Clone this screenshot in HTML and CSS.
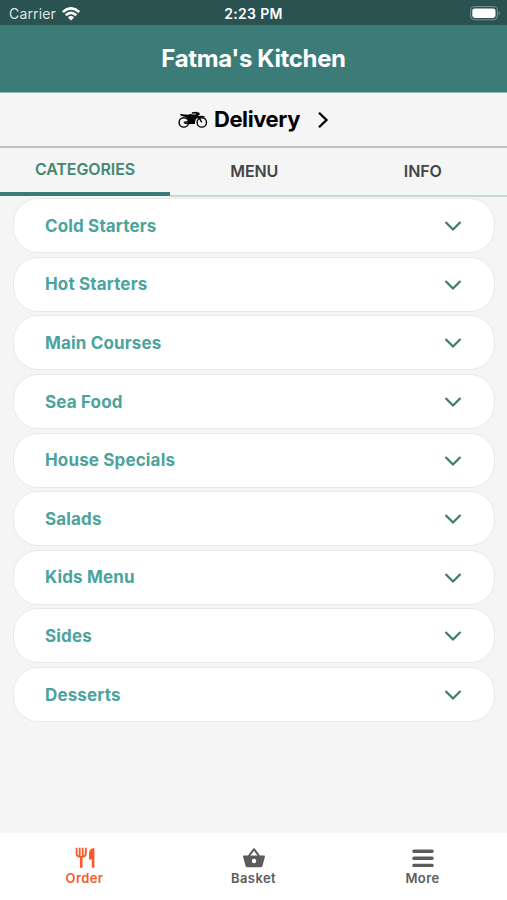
FILE: index.html
```html
<!DOCTYPE html>
<html lang="en">
<head>
  <meta charset="UTF-8" />
  <meta name="viewport" content="width=device-width, initial-scale=1.0" />
  <title>Fatma's Kitchen</title>
  <link rel="stylesheet" href="styles.css">
</head>
<body>

  <svg class="sprite" width="0" height="0">
    <symbol id="chevron" viewBox="0 0 18 12">
      <path d="M1.5 2 L9 9.5 L16.5 2" fill="none" stroke="currentColor" stroke-width="2.2" />
    </symbol>
  </svg>

  <div class="status-bar">
    <div class="carrier">
      <span>Carrier</span>
      <svg class="wifi" viewBox="0 0 18 14" width="18" height="14">
        <path d="M0.8 5.1 Q9 -2.3 17.2 5.1 M3.7 8.2 Q9 3.4 14.3 8.2" fill="none" stroke="#fff" stroke-width="2.7" />
        <path d="M5.9 10.4 Q9 7.6 12.1 10.4 L9 13.6 Z" fill="#fff" />
      </svg>
    </div>
    <span class="time">2:23 PM</span>
    <svg class="battery" viewBox="0 0 31 15" width="31" height="15">
      <rect x="0.6" y="0.6" width="26.8" height="13.2" rx="4" fill="none" stroke="#7d9694" />
      <rect x="2.3" y="2.4" width="23.2" height="9.6" rx="2.4" fill="#fff" />
      <path d="M28.8 5 Q30.8 7.2 28.8 9.6 Z" fill="#7d9694" />
    </svg>
  </div>

  <header class="header">
    <h1>Fatma's Kitchen</h1>
  </header>

  <div class="delivery">
    <svg class="bike" viewBox="0 0 30 18" width="30" height="18">
      <g fill="none" stroke="#000" stroke-width="1.4">
        <circle cx="5.8" cy="11.4" r="4.7" />
        <circle cx="23.8" cy="11.4" r="4.7" />
        <path d="M23.8 11.4 L18 1.6 L13.8 2" />
        <path d="M5.8 11.4 L12 10.4" />
      </g>
      <path d="M1.6 3 L10 3.8 Q12.5 2.6 15 3.4 L19.2 3.2 L20.4 6.4 L17.6 8.4 L16.8 12.8 L11.2 13.2 L9.6 7.4 Q7 5.2 3.5 5 Z" />
      <path d="M17.5 1 L21.2 1.4 L22 3.7 L19.5 4.2 Z" />
      <path d="M19.8 6 Q23 3.8 27 5.8 L26.4 6.8 Q23.4 5.6 21 7.4 Z" />
      <path d="M6.5 11.6 L17 11.4 L16.6 13 L6.5 12.9 Z" />
    </svg>
    <span class="delivery-label">Delivery</span>
    <svg class="next" viewBox="0 0 12 18" width="12" height="18">
      <path d="M2 1.7 L9.5 9 L2 16.3" fill="none" stroke="#000" stroke-width="2.3" />
    </svg>
  </div>

  <div class="tabs">
    <div class="tab active"><span>CATEGORIES</span></div>
    <div class="tab"><span>MENU</span></div>
    <div class="tab"><span>INFO</span></div>
  </div>

  <main class="categories">
    <div class="category"><span>Cold Starters</span><svg class="arrow"><use href="#chevron" /></svg></div>
    <div class="category"><span>Hot Starters</span><svg class="arrow"><use href="#chevron" /></svg></div>
    <div class="category"><span>Main Courses</span><svg class="arrow"><use href="#chevron" /></svg></div>
    <div class="category"><span>Sea Food</span><svg class="arrow"><use href="#chevron" /></svg></div>
    <div class="category"><span>House Specials</span><svg class="arrow"><use href="#chevron" /></svg></div>
    <div class="category"><span>Salads</span><svg class="arrow"><use href="#chevron" /></svg></div>
    <div class="category"><span>Kids Menu</span><svg class="arrow"><use href="#chevron" /></svg></div>
    <div class="category"><span>Sides</span><svg class="arrow"><use href="#chevron" /></svg></div>
    <div class="category"><span>Desserts</span><svg class="arrow"><use href="#chevron" /></svg></div>
  </main>

  <nav class="bottom-nav">
    <div class="nav-item selected">
      <svg viewBox="0 0 24 22" width="24" height="22">
        <path d="M3.6 0.8 V6.8 Q3.6 9.8 8.2 9.8 Q12.8 9.8 12.8 6.8 V0.8 M6.7 0.8 V9 M9.7 0.8 V9" fill="none" stroke="currentColor" stroke-width="1.8" />
        <path d="M6.9 9 H9.5 V20.8 H6.9 Z" fill="currentColor" />
        <path d="M21.4 1 V20.8 H18.8 V12.6 H16 V6.2 Q16 1.6 21.4 1 Z" fill="currentColor" />
      </svg>
      <span>Order</span>
    </div>
    <div class="nav-item">
      <svg viewBox="0 0 24 22" width="24" height="22">
        <path d="M6.8 9.2 L12 2.2 L17.2 9.2" fill="none" stroke="currentColor" stroke-width="2" stroke-linejoin="round" />
        <path fill-rule="evenodd" d="M1.8 8.4 H22.2 Q23.4 8.4 23 9.6 L20.5 18.7 Q20.1 20.2 18.6 20.2 H5.4 Q3.9 20.2 3.5 18.7 L1 9.6 Q0.6 8.4 1.8 8.4 Z M12 11.8 A2.2 2.2 0 1 0 12 16.2 A2.2 2.2 0 1 0 12 11.8 Z" fill="currentColor" />
      </svg>
      <span>Basket</span>
    </div>
    <div class="nav-item">
      <svg viewBox="0 0 24 22" width="24" height="22">
        <path d="M2.9 4.2 H21.1 M2.9 11.3 H21.1 M2.9 18.4 H21.1" stroke="currentColor" stroke-width="3.4" stroke-linecap="round" />
      </svg>
      <span>More</span>
    </div>
  </nav>

</body>
</html>
```
FILE: styles.css
```css
* {
  box-sizing: border-box;
}

body {
  margin: 0;
  height: 100vh;
  display: flex;
  flex-direction: column;
  background-color: #f5f5f5;
  font-family: Inter, "Liberation Sans", sans-serif;
}

.sprite {
  position: absolute;
}

.status-bar {
  height: 25px;
  flex: none;
  display: grid;
  grid-template-columns: 1fr auto 1fr;
  align-items: center;
  padding: 2px 6px 0 9px;
  background-color: #295251;
  color: #fff;
  font-size: 14px;
}

.carrier {
  display: flex;
  align-items: center;
  gap: 6px;
  color: #dce6e5;
  letter-spacing: 0.15px;
}

.time {
  margin-right: 3px;
  font-weight: 600;
  letter-spacing: 0.3px;
}

.battery {
  justify-self: end;
}

.header {
  height: 68px;
  flex: none;
  display: flex;
  align-items: center;
  justify-content: center;
  background-color: #3b7c78;
  border-bottom: 1px solid #8fb9b5;
}

.header h1 {
  margin: 0;
  color: #fff;
  font-size: 24px;
  font-weight: 700;
  letter-spacing: -0.35px;
}

.delivery {
  height: 55px;
  flex: none;
  display: flex;
  align-items: center;
  justify-content: center;
  border-bottom: 2px solid #c0c2c1;
}

.delivery-label {
  margin: -2px 17px 0 6px;
  font-size: 22px;
  font-weight: 700;
  letter-spacing: -0.4px;
}

.tabs {
  height: 49px;
  flex: none;
  display: grid;
  grid-template-columns: 170px 1fr 1fr;
}

.tab {
  display: flex;
  align-items: center;
  justify-content: center;
  padding-bottom: 2px;
  border-bottom: 2px solid #c5d9d5;
  color: #444;
  font-size: 16px;
  font-weight: 600;
  letter-spacing: -0.1px;
}

.tab.active {
  border-bottom: 4px solid #3b7c78;
  margin-bottom: 1px;
  color: #438773;
}

.categories {
  flex: 1;
  display: flex;
  flex-direction: column;
  gap: 3.6px;
  padding: 1.3px 12px 0 13px;
}

.category {
  height: 55px;
  flex: none;
  display: flex;
  align-items: center;
  justify-content: space-between;
  padding: 0 32px 0 31px;
  background-color: #fff;
  border: 1px solid #e9e9e9;
  border-radius: 25px;
  color: #4ba49c;
  font-size: 17px;
  font-weight: 650;
  letter-spacing: 0.15px;
}

.arrow {
  width: 18px;
  height: 12px;
  margin-top: 1px;
  color: #3b7c6e;
}

.bottom-nav {
  height: 67px;
  flex: none;
  display: grid;
  grid-template-columns: 1fr 1fr 1fr;
  background-color: #fff;
}

.nav-item {
  display: flex;
  flex-direction: column;
  align-items: center;
  padding-top: 14px;
  color: #5c5c5c;
  font-size: 13px;
  font-weight: 600;
  letter-spacing: 0.4px;
}

.nav-item span {
  margin-top: 1px;
}

.nav-item.selected {
  color: #f9592b;
}
```
